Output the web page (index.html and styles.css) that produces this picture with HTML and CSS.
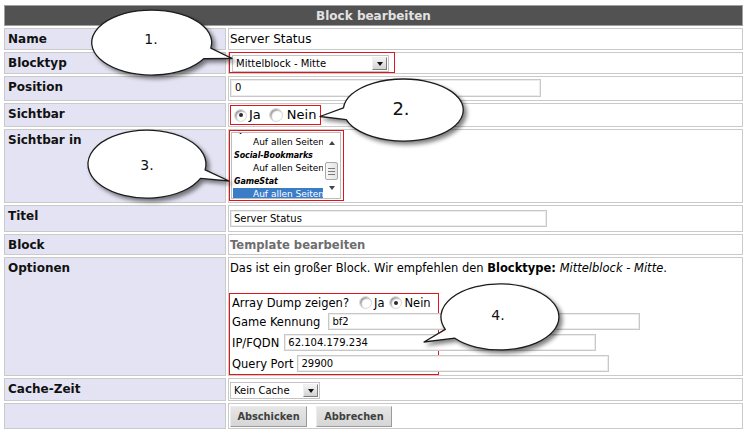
FILE: index.html
```html
<!DOCTYPE html>
<html lang="de">
<head>
<meta charset="utf-8">
<title>Block bearbeiten</title>
<link rel="stylesheet" href="styles.css">
</head>
<body>
<div class="page">
  <div class="form">
    <div class="head">Block bearbeiten</div>

    <div class="lbl">Name</div>
    <div class="val">Server Status</div>

    <div class="lbl">Blocktyp</div>
    <div class="val tight">
      <span class="redbox rb-type">
        <span class="select w-type"><span class="sel-text">Mittelblock - Mitte</span><span class="sel-btn"><span class="tri"></span></span></span>
      </span>
    </div>

    <div class="lbl">Position</div>
    <div class="val"><span class="input w-pos">0</span></div>

    <div class="lbl">Sichtbar</div>
    <div class="val tight vis-cell">
      <span class="redbox rb-vis">
        <span class="radio checked"></span><span class="rlabel">Ja</span>
        <span class="radio r2"></span><span class="rlabel l2">Nein</span>
      </span>
    </div>

    <div class="lbl">Sichtbar in</div>
    <div class="val tight">
      <span class="redbox rb-list">
        <span class="listbox">
          <span class="items">
            <span class="items-inner">
              <span class="opt grp">Spiele</span>
              <span class="opt sub">Auf allen Seiten</span>
              <span class="opt grp">Social-Bookmarks</span>
              <span class="opt sub">Auf allen Seiten</span>
              <span class="opt grp">GameStat</span>
              <span class="opt sub sel">Auf allen Seiten</span>
            </span>
          </span>
          <span class="scrollbar">
            <span class="sb-arrow up"></span>
            <span class="sb-thumb"><span class="grip"></span><span class="grip"></span><span class="grip"></span></span>
            <span class="sb-arrow down"></span>
          </span>
        </span>
      </span>
    </div>

    <div class="lbl">Titel</div>
    <div class="val title-cell"><span class="input w-title">Server Status</span></div>

    <div class="lbl">Block</div>
    <div class="val"><span class="tpl">Template bearbeiten</span></div>

    <div class="lbl">Optionen</div>
    <div class="val opt-cell">
      <div class="sentence">Das ist ein großer Block. Wir empfehlen den <b>Blocktype:</b> <i>Mittelblock - Mitte</i>.</div>
      <div class="redbox rb-opts">
        <div class="oline first">Array Dump zeigen?<span class="radio o1"></span><span class="rlabel small">Ja</span><span class="radio checked o2"></span><span class="rlabel small">Nein</span></div>
        <div class="oline">Game Kennung<span class="input w-opt m-game">bf2</span></div>
        <div class="oline">IP/FQDN<span class="input w-opt m-ip">62.104.179.234</span></div>
        <div class="oline">Query Port<span class="input w-opt m-port">29900</span></div>
      </div>
    </div>

    <div class="lbl">Cache-Zeit</div>
    <div class="val"><span class="select w-cache"><span class="sel-text">Kein Cache</span><span class="sel-btn"><span class="tri"></span></span></span></div>

    <div class="lbl"></div>
    <div class="val btn-cell"><span class="btn b1">Abschicken</span><span class="btn b2">Abbrechen</span></div>
  </div>

  <svg class="callouts" width="749" height="435" viewBox="0 0 749 435" xmlns="http://www.w3.org/2000/svg">
    <defs>
      <filter id="sh" x="-20%" y="-30%" width="150%" height="170%">
        <feGaussianBlur in="SourceAlpha" stdDeviation="2.2"/>
        <feOffset dx="3" dy="3" result="o"/>
        <feComponentTransfer><feFuncA type="linear" slope="0.5"/></feComponentTransfer>
        <feMerge><feMergeNode/><feMergeNode in="SourceGraphic"/></feMerge>
      </filter>
    </defs>
    <g class="bubble" filter="url(#sh)">
      <path d="M210.8 48.1 L232 58.5 L203.7 58.75 A60 32.5 0 1 1 210.8 48.1 Z"/>
    </g>
    <g class="bubble" filter="url(#sh)">
      <path d="M343.46 107.84 L320 116.5 L346.24 119.58 A60 31 0 1 0 343.46 107.84 Z"/>
    </g>
    <g class="bubble" filter="url(#sh)">
      <path d="M205.1 169.9 L229 181 L200.5 178.4 A59 34 0 1 1 205.1 169.9 Z"/>
    </g>
    <g class="bubble" filter="url(#sh)">
      <path d="M445.3 329.4 L424 342 L454.8 338.2 A59 33 0 1 0 445.3 329.4 Z"/>
    </g>
    <text class="num" x="151" y="44">1.</text>
    <text class="num big" x="401" y="115">2.</text>
    <text class="num" x="147" y="170">3.</text>
    <text class="num" x="498" y="320">4.</text>
  </svg>
</div>
</body>
</html>
```

FILE: styles.css
```css
* { box-sizing: border-box; }

body {
  margin: 0;
  background: #ffffff;
  font-family: "DejaVu Sans", Verdana, sans-serif;
  color: #000;
}

.page {
  position: relative;
  width: 749px;
  height: 435px;
  overflow: hidden;
}

/* ---------- form grid ---------- */
.form {
  display: grid;
  grid-template-columns: 222px 515px;
  grid-template-rows: 21px 22px 22px 25px 24px 74px 27px 21px 119px 23px 26px;
  gap: 2px;
  margin: 5px 0 0 4px;
}

.head, .lbl, .val {
  border: 1px solid #cacaca;
}

.head {
  grid-column: 1 / span 2;
  display: flex;
  align-items: center;
  justify-content: center;
  background: #525252;
  border-color: #a0a0a0;
  color: #e2e2e2;
  font-size: 12px;
  font-weight: bold;
}

.lbl {
  background: #e3e3f3;
  color: #111;
  font-size: 12px;
  font-weight: bold;
  line-height: 16px;
  padding: 2px 3px 0 3px;
}

.val {
  font-size: 12px;
  line-height: 16px;
  padding: 2px 2px 0 1px;
}
.val.tight { padding: 0; }
.val.vis-cell { padding: 1px 0 0 1px; }
.val.title-cell { padding-top: 4px; }

/* ---------- red marker boxes ---------- */
.redbox {
  border: 1px solid #e2141b;
}
.rb-type {
  display: inline-block;
  height: 21px;
  margin-top: -1px;
  padding: 2px 5px 1px 2px;
  vertical-align: top;
}
.rb-vis {
  display: inline-flex;
  align-items: center;
  height: 20px;
  padding: 0 4px 0 3px;
  vertical-align: top;
}
.rb-list {
  display: inline-block;
  padding: 1px 2px 1px 1px;
  vertical-align: top;
}
.rb-opts {
  width: 210px;
  margin-left: -1px;
  padding: 0 3px 0 2px;
  white-space: nowrap;
  font-size: 11.5px;
}

/* ---------- controls ---------- */
.select {
  display: flex;
  align-items: center;
  height: 17px;
  border: 1px solid #c4c4c4;
  background: #fff;
  font-size: 10px;
  line-height: 15px;
  padding-left: 3px;
}
.w-type { width: 157px; }
.w-cache { width: 90px; margin-top: 1px; }
.sel-text { flex: 1; white-space: nowrap; }
.sel-btn {
  width: 15px;
  height: 13px;
  margin-right: 1px;
  background: linear-gradient(#f4f4f4, #d2d2d2);
  border: 1px solid;
  border-color: #f0f0f0 #7d7d7d #7d7d7d #f0f0f0;
  display: flex;
  align-items: center;
  justify-content: center;
}
.tri {
  width: 0;
  height: 0;
  border-left: 3.5px solid transparent;
  border-right: 3.5px solid transparent;
  border-top: 4px solid #111;
}

.input {
  display: flex;
  align-items: center;
  background: #fff;
  border: 1px solid #c8c8c8;
  box-shadow: inset 0 0 0 1px #ececec;
  font-size: 10px;
  line-height: 14px;
  padding-left: 4px;
  white-space: nowrap;
}
.w-pos { width: 311px; height: 18px; }
.w-title { width: 317px; height: 17px; padding-left: 3px; }
.w-opt { width: 312px; height: 17px; padding-left: 3px; flex: none; }
.m-game { margin-left: 8px; }
.m-ip { margin-left: 5px; }
.m-port { margin-left: 4px; }

.radio {
  position: relative;
  display: inline-block;
  flex: none;
  width: 13px;
  height: 13px;
  border-radius: 50%;
  background: #fff;
  border: 1px solid #d8d8d8;
  box-shadow: inset 1.5px 1.5px 1.5px #9c9c9c;
}
.radio.checked::after {
  content: "";
  position: absolute;
  left: 3.5px;
  top: 3.5px;
  width: 4px;
  height: 4px;
  border-radius: 50%;
  background: #2a2a2a;
}
.rlabel {
  font-size: 13px;
  line-height: 16px;
  margin-left: 2px;
}
.radio.r2 { margin-left: 8px; width: 14px; height: 14px; }
.rlabel.l2 { margin-left: 4px; }
.rlabel.small { font-size: 11.5px; margin-left: 2px; }
.radio.o1 { margin-left: 10px; }
.radio.o2 { margin-left: 5px; }

/* ---------- listbox ---------- */
.listbox {
  display: flex;
  width: 110px;
  height: 67px;
  border: 1px solid #bdbdbd;
  background: #fff;
  overflow: hidden;
}
.items {
  flex: 1;
  overflow: hidden;
  padding-left: 1px;
}
.items-inner {
  display: block;
  margin-top: -10.5px;
}
.opt {
  display: block;
  height: 13px;
  line-height: 13px;
  font-size: 9px;
  white-space: nowrap;
  overflow: hidden;
}
.opt.grp {
  font-weight: bold;
  font-style: italic;
  font-size: 8px;
  letter-spacing: -0.1px;
  padding-left: 1px;
}
.opt.sub { padding-left: 20px; }
.opt.sel { background: #3b7cc7; color: #fff; }

.scrollbar {
  display: flex;
  flex-direction: column;
  align-items: center;
  width: 17px;
  background: #fff;
}
.sb-arrow {
  width: 0;
  height: 0;
  border-left: 3.5px solid transparent;
  border-right: 3.5px solid transparent;
}
.sb-arrow.up { border-bottom: 4px solid #444; margin-top: 8px; }
.sb-arrow.down { border-top: 4px solid #444; margin-top: auto; margin-bottom: 8px; }
.sb-thumb {
  display: flex;
  flex-direction: column;
  justify-content: center;
  align-items: center;
  gap: 2px;
  width: 13px;
  height: 18px;
  margin-top: 17px;
  border: 1px solid #a8a8a8;
  border-radius: 2px;
  background: linear-gradient(90deg, #f7f7f7, #e4e4e4);
}
.grip {
  width: 7px;
  height: 1px;
  background: #7a7a7a;
}

/* ---------- other cells ---------- */
.tpl {
  color: #6e6e6e;
  font-weight: bold;
  font-size: 11.6px;
}
.opt-cell { font-size: 11.5px; }
.sentence {
  line-height: 16px;
  margin-bottom: 17px;
  white-space: nowrap;
}
.oline {
  display: flex;
  align-items: center;
  height: 21px;
  line-height: 16px;
}
.oline.first { height: 17px; }

.btn-cell { display: flex; align-items: flex-start; padding-top: 2px; }
.btn {
  display: inline-flex;
  align-items: center;
  justify-content: center;
  height: 21px;
  background: linear-gradient(#e6e6e6, #d6d6d6);
  border: 1px solid;
  border-color: #ededed #9a9a9a #9a9a9a #ededed;
  color: #404040;
  font-size: 9.8px;
  font-weight: bold;
}
.b1 { width: 77px; margin-right: 9px; }
.b2 { width: 76px; }

/* ---------- callouts overlay ---------- */
.callouts {
  position: absolute;
  left: 0;
  top: 0;
  pointer-events: none;
}
.bubble path {
  fill: #fff;
  stroke: #1c1c1c;
  stroke-width: 1.3;
  stroke-linejoin: round;
}
.num {
  font-family: "DejaVu Sans", Verdana, sans-serif;
  font-size: 14px;
  text-anchor: middle;
  fill: #111;
}
.num.big { font-size: 18px; }
```
